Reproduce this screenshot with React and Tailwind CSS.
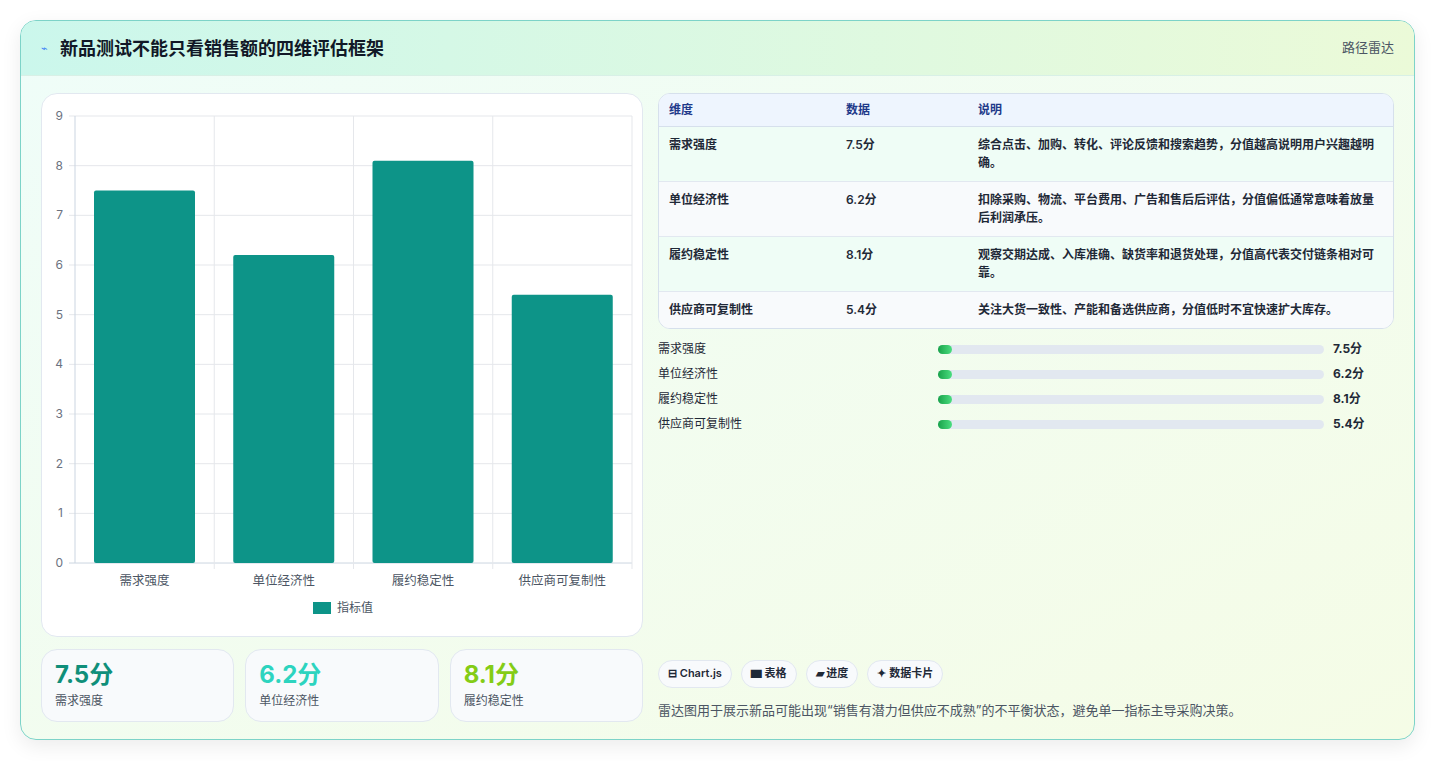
const rows = [
  { name: '需求强度', v: 7.5, desc: '综合点击、加购、转化、评论反馈和搜索趋势，分值越高说明用户兴趣越明确。' },
  { name: '单位经济性', v: 6.2, desc: '扣除采购、物流、平台费用、广告和售后后评估，分值偏低通常意味着放量后利润承压。' },
  { name: '履约稳定性', v: 8.1, desc: '观察交期达成、入库准确、缺货率和退货处理，分值高代表交付链条相对可靠。' },
  { name: '供应商可复制性', v: 5.4, desc: '关注大货一致性、产能和备选供应商，分值低时不宜快速扩大库存。' },
];

const Chart = () => {
  const top = 22, unit = 49.67, left = 33, right = 590;
  const colW = (right - left) / 4;
  const y = (v) => top + (9 - v) * unit;
  return (
    <svg width="602" height="543" className="block">
      {[0, 1, 2, 3, 4, 5, 6, 7, 8, 9].map((v) => (
        <g key={v}>
          <line x1={left - 6} x2={right} y1={y(v)} y2={y(v)} stroke={v === 0 ? '#cbd5e1' : '#e5e7eb'} />
          <text x={left - 12} y={y(v) + 4} textAnchor="end" fontSize="12" fill="#6b7280">{v}</text>
        </g>
      ))}
      {[0, 1, 2, 3, 4].map((i) => (
        <line key={i} x1={left + i * colW} x2={left + i * colW} y1={top} y2={y(0) + (i === 0 ? 0 : 6)} stroke={i === 0 ? '#cbd5e1' : '#e5e7eb'} />
      ))}
      {rows.map((r, i) => (
        <g key={r.name}>
          <rect x={left + i * colW + 19} y={y(r.v)} width="101" height={y(0) - y(r.v)} rx="2" fill="#0d9488" />
          <text x={left + i * colW + colW / 2} y={491} textAnchor="middle" fontSize="12.5" fill="#4b5563">{r.name}</text>
        </g>
      ))}
      <rect x="271" y="508" width="18" height="12" fill="#0d9488" />
      <text x="295" y="518" fontSize="12" fill="#4b5563">指标值</text>
    </svg>
  );
};

export default function App() {
  return (
    <div className="min-h-screen bg-white p-5 pb-0" style={{ fontFamily: 'Inter, "Noto Sans CJK SC", sans-serif' }}>
      <div className="rounded-2xl border border-[#7dd3c8] bg-gradient-to-br from-[#effdf9] to-[#f5fce6] shadow-[0_6px_20px_rgba(0,0,0,0.08)] overflow-hidden h-[720px]">
        <div className="h-[55px] flex items-center justify-between px-5 bg-gradient-to-r from-[#cbf7ec] to-[#ebfad8] border-b border-[#d8f0e6]">
          <div className="flex items-center gap-3">
            <span className="text-[#3b82f6] text-[11px]">⌁</span>
            <h1 className="text-[18px] font-bold text-[#111827]">新品测试不能只看销售额的四维评估框架</h1>
          </div>
          <span className="text-[13px] text-[#4b5563]">路径雷达</span>
        </div>
        <div className="flex gap-[15px] px-5 pt-[17px]">
          <div className="w-[602px] flex flex-col gap-3">
            <div className="rounded-2xl border border-[#e2e8f0] bg-white h-[544px]"><Chart /></div>
            <div className="grid grid-cols-3 gap-[11px]">
              {[['7.5分', '需求强度', 'text-[#0f8f7a]'], ['6.2分', '单位经济性', 'text-[#2dd4bf]'], ['8.1分', '履约稳定性', 'text-[#84cc16]']].map(([v, l, c]) => (
                <div key={l} className="h-[73px] rounded-2xl border border-[#e2e8f0] bg-[#f8fafc] px-[13px] pt-[10px]">
                  <div className={`text-[24px] font-bold leading-[30px] ${c}`}>{v}</div>
                  <div className="text-[12px] text-[#4b5563] mt-[2px]">{l}</div>
                </div>
              ))}
            </div>
          </div>
          <div className="flex-1 flex flex-col">
            <div className="rounded-xl border border-[#d6e0ec] overflow-hidden bg-white text-[12px] text-[#1f2937] font-semibold">
              <div className="grid grid-cols-[177px_132px_1fr] h-[33px] items-center px-[10px] bg-[#eef5fe] text-[#1e3a8a] border-b border-[#d6e0ec]">
                <span>维度</span><span>数据</span><span>说明</span>
              </div>
              {rows.map((r, i) => (
                <div key={r.name} className={`grid grid-cols-[177px_132px_1fr] px-[10px] py-[9px] leading-[18px] ${i < 3 ? 'border-b border-[#e2e8f0] min-h-[53px]' : ''} ${i % 2 ? 'bg-[#f8fafc]' : 'bg-[#effdf6]'}`}>
                  <span>{r.name}</span><span>{r.v}分</span><span>{r.desc}</span>
                </div>
              ))}
            </div>
            <div className="flex flex-col gap-[7px] mt-[11px]">
              {rows.map((r) => (
                <div key={r.name} className="flex items-center h-[18px] text-[12px] text-[#1f2937]">
                  <span className="w-[280px]">{r.name}</span>
                  <div className="w-[386px] h-[9px] rounded-full bg-[#e2e8f0]">
                    <div className="w-[14px] h-[9px] rounded-full bg-gradient-to-r from-[#16a34a] to-[#4ade80]" />
                  </div>
                  <span className="ml-[9px] font-bold">{r.v}分</span>
                </div>
              ))}
            </div>
            <div className="mt-auto flex gap-[9px] pb-[8px]">
              {['⊟ Chart.js', '▆ 表格', '▰ 进度', '✦ 数据卡片'].map((t) => (
                <span key={t} className="h-[28px] px-[9px] flex items-center rounded-full border border-[#e2e8f0] bg-[#f8fafc] text-[11px] font-semibold text-[#1f2937]">{t}</span>
              ))}
            </div>
            <p className="text-[13px] text-[#4b5563] mt-[5px] mb-[2px]">雷达图用于展示新品可能出现“销售有潜力但供应不成熟”的不平衡状态，避免单一指标主导采购决策。</p>
          </div>
        </div>
      </div>
    </div>
  );
}
